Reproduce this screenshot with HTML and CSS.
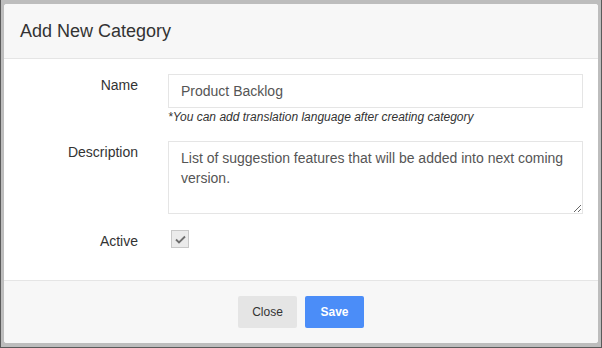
FILE: index.html
```html
<!DOCTYPE html>
<html lang="en">
<head>
    <meta charset="UTF-8">
    <meta name="viewport" content="width=device-width, initial-scale=1.0">
    <title>Add New Category</title>
    <link rel="stylesheet" href="styles.css">
</head>
<body>
    <div class="modal">
        <div class="modal-header">
            <h4 class="modal-title">Add New Category</h4>
        </div>
        <form class="modal-body">
            <div class="form-row">
                <label class="form-label" for="name">Name</label>
                <div class="form-field">
                    <input type="text" id="name" class="form-control" value="Product Backlog">
                    <p class="hint">*You can add translation language after creating category</p>
                </div>
            </div>
            <div class="form-row">
                <label class="form-label" for="description">Description</label>
                <div class="form-field">
                    <textarea id="description" class="form-control area">List of suggestion features that will be added into next coming version.</textarea>
                </div>
            </div>
            <div class="form-row">
                <label class="form-label" for="active">Active</label>
                <div class="form-field">
                    <label class="check">
                        <input type="checkbox" id="active" checked>
                        <span class="check-box">
                            <svg width="11" height="9" viewBox="0 0 11 9"><path d="M1 4.5 L4 7.5 L10 1.5" fill="none" stroke="#6f6f6f" stroke-width="1.8"/></svg>
                        </span>
                    </label>
                </div>
            </div>
        </form>
        <div class="modal-footer">
            <button class="btn btn-default" type="button">Close</button>
            <button class="btn btn-primary" type="button">Save</button>
        </div>
    </div>
</body>
</html>
```

FILE: styles.css
```css
html {
    background: #bdbdbd;
}
body {
    margin: 0;
    padding: 4px 4px 5px 4px;
    font-family: "Liberation Sans", Arial, sans-serif;
    font-size: 14px;
    color: #333;
    box-shadow: inset 1px 0 0 #5a5a5a, inset -1px -1px 0 #5a5a5a;
    min-height: 348px;
    box-sizing: border-box;
}
.modal {
    background: #fff;
    border-radius: 3px;
    overflow: hidden;
}
.modal-header {
    background: #f7f7f7;
    border-bottom: 1px solid #e5e5e5;
    padding: 15px 20px 15px 16px;
}
.modal-title {
    margin: 0;
    font-size: 18px;
    font-weight: normal;
    line-height: 24px;
    color: #333;
}
.modal-body {
    margin: 0;
    padding: 15px 15px 29px 0;
    border-bottom: 1px solid #e5e5e5;
}
.form-row {
    display: grid;
    grid-template-columns: 134px 1fr;
    column-gap: 30px;
    margin-bottom: 16px;
}
.form-row:last-child {
    margin-bottom: 0;
}
.form-label {
    text-align: right;
    padding-top: 1px;
    line-height: 20px;
    color: #333;
}
.form-control {
    display: block;
    width: 100%;
    box-sizing: border-box;
    margin: 0;
    padding: 6px 12px;
    border: 1px solid #e5e5e5;
    border-radius: 0;
    font-family: inherit;
    font-size: 14px;
    line-height: 20px;
    color: #555;
    background: #fff;
}
.area {
    height: 73px;
    resize: vertical;
}
.hint {
    margin: 1px 0 0;
    font-size: 12px;
    line-height: 16px;
    font-style: italic;
    color: #333;
}
.check {
    display: inline-block;
    padding: 0 0 0 3px;
}
.check input {
    display: none;
}
.check-box {
    display: flex;
    align-items: center;
    justify-content: center;
    width: 18px;
    height: 18px;
    box-sizing: border-box;
    background: #ebebeb;
    border: 1px solid #c8c8c8;
}
.modal-footer {
    background: #f7f7f7;
    padding: 15px;
    display: flex;
    justify-content: center;
    gap: 8px;
}
.btn {
    width: 59px;
    height: 32px;
    border: none;
    border-radius: 2px;
    font-family: inherit;
    font-size: 12px;
    cursor: pointer;
}
.btn-default {
    background: #e5e5e5;
    color: #333;
}
.btn-primary {
    background: #4b8df8;
    color: #fff;
    font-weight: bold;
}
```
